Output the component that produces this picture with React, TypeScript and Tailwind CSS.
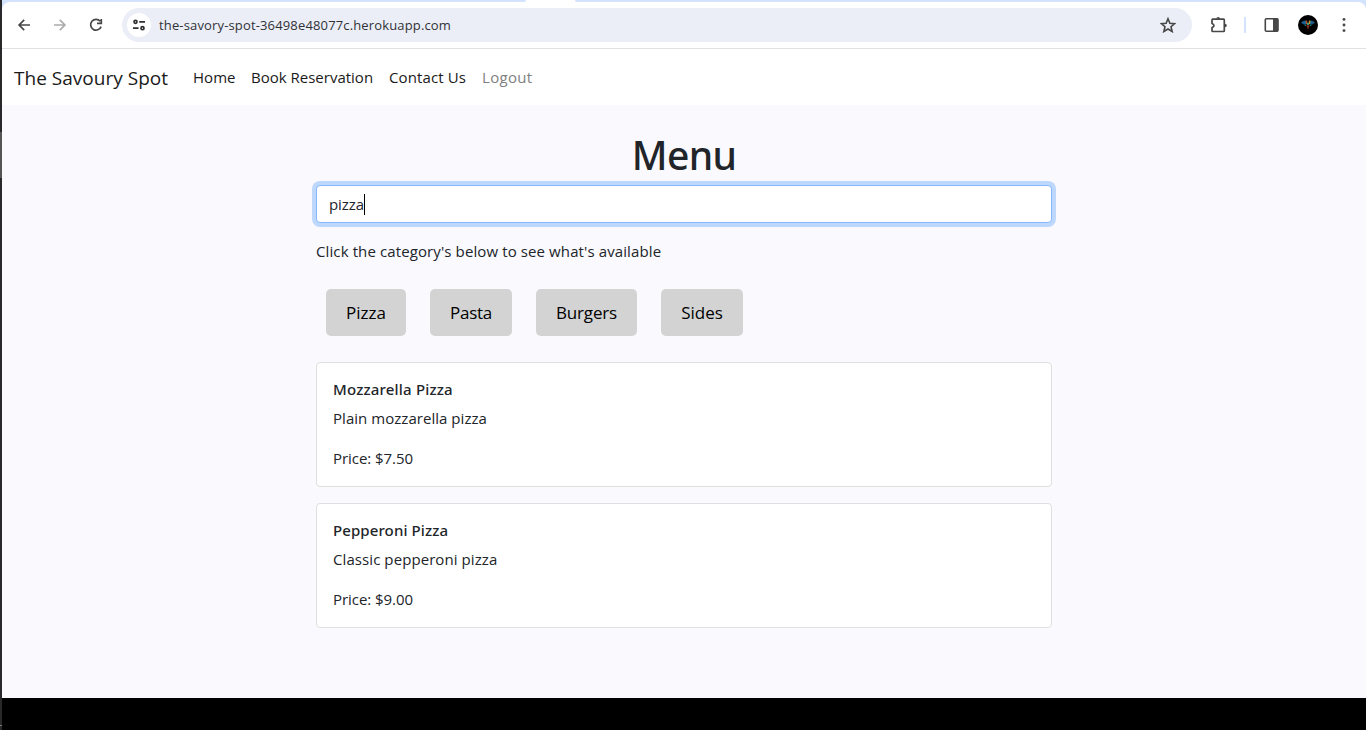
import type { ReactNode } from "react";

function Icon({ children, className }: { children: ReactNode; className: string }) {
  return (
    <svg viewBox="0 0 16 16" className={`h-4 w-4 shrink-0 ${className}`} fill="none" stroke="currentColor" strokeWidth="1.7">
      {children}
    </svg>
  );
}

function Avatar() {
  return (
    <svg viewBox="0 0 20 20" className="ml-[18px] h-5 w-5 shrink-0">
      <circle cx="10" cy="10" r="10" fill="#000" />
      <path d="M3 7.500 6 5.700h3l-1 3.500-3.500-.5z" fill="#17639c" />
      <path d="m17 7.500-3-1.800h-3l1 3.500 3.500-.5z" fill="#1d5f8c" />
      <path d="m7.500 5.700 1.500-.2.500 3-1.500 1z" fill="#b5502a" />
      <path d="m12.500 5.700-1.500-.2-.5 3 1.500 1z" fill="#c8922c" />
      <path d="m9 7.500 1 .5 1-.5v2.500H9z" fill="#4b9a76" />
      <path d="m5 9.200 3 .6v1.400zM15 9.200l-3 .6v1.400z" fill="#208f9a" />
      <path d="m8.200 10.200h3.600L10 14.700z" fill="#852b1c" />
    </svg>
  );
}

function BrowserBar() {
  return (
    <header className="shrink-0">
      <div className="flex h-[2px] justify-between bg-white">
        <div className="w-[524px] rounded-br-[2px] bg-[#d3e3fd]" />
        <div className="w-[791px] rounded-bl-[2px] bg-[#d3e3fd]" />
      </div>
      <div className="bg-[#d3e3fd]">
        <div className="flex h-[47px] items-center rounded-t-[8px] border-b border-[#dfe1e5] bg-white pl-[14px] text-[#474747]">
          <Icon className="">
            <path d="M14 8H3.200M8.200 2.900 3.100 8l5.100 5.100" />
          </Icon>
          <Icon className="ml-5 text-[#ababab]">
            <path d="M2 8h10.800M7.800 2.900 12.900 8l-5.100 5.100" />
          </Icon>
          <Icon className="ml-5">
            <path d="M12.200 4.300A5.400 5.400 0 1 0 13.100 9.600M13.300 2v4.400H9" />
          </Icon>
          <div className="ml-[18px] flex h-[34px] w-[1070px] items-center rounded-full bg-[#ebeef7] pr-4 pl-[5px]">
            <div className="flex h-6 w-6 items-center justify-center rounded-full bg-white text-[#303030]">
              <Icon className="">
                <circle cx="4.500" cy="4.800" r="1.500" />
                <path d="M8.200 4.800H14M2 11.200h5.500" />
                <circle cx="11.500" cy="11.200" r="1.500" />
              </Icon>
            </div>
            <span className="ml-2 flex-1 pt-[2px] text-[13px] tracking-[0.15px] text-[#303236]">the-savory-spot-36498e48077c.herokuapp.com</span>
            <svg viewBox="0.500 0.300 15 15" className="h-4 w-4" fill="none" stroke="currentColor" strokeWidth="1.500">
              <path d="m8 1.900 1.750 4.250 4.500.35-3.450 2.950 1.100 4.450L8 11.500l-3.900 2.400 1.100-4.450L1.750 6.500l4.500-.35z" />
            </svg>
          </div>
          <svg viewBox="0 0 18 18" className="ml-[18px] h-[18px] w-[18px] shrink-0" fill="none" stroke="currentColor" strokeWidth="1.700">
            <path d="M2.800 3.200h10.700q.8 0 .8.800v10.700q0 .8-.8.800H2.800q-.8 0-.8-.8v-3.100l1.600-1.100q.6-.9 0-1.800L2 7.400V4q0-.8.800-.8z" strokeLinejoin="round" />
            <path d="M6.400 2.700a1.800 1.800 0 0 1 3.600 0zM15 7.700a1.800 1.800 0 0 1 0 3.600z" fill="currentColor" stroke="none" />
          </svg>
          <div className="ml-4 h-4 w-[2px] bg-[#d3e3fd]" />
          <svg viewBox="0 0 16 16" className="ml-[18px] h-4 w-4 shrink-0">
            <rect x="1.300" y="1.800" width="12.700" height="12.500" rx="1" fill="none" stroke="#474747" strokeWidth="1.600" />
            <path d="M9 1.500h5v13H9z" fill="#474747" />
          </svg>
          <Avatar />
          <svg viewBox="0 0 4 16" className="ml-6 h-4 w-1 shrink-0" fill="currentColor">
            <circle cx="2" cy="2.400" r="1.450" />
            <circle cx="2" cy="8" r="1.450" />
            <circle cx="2" cy="13.600" r="1.450" />
          </svg>
        </div>
      </div>
    </header>
  );
}

function MenuCard({ name, description, price, nameClass, descriptionClass }: { name: string; description: string; price: string; nameClass: string; descriptionClass: string }) {
  return (
    <article className="mb-4 h-[125px] rounded-[4px] border border-[#dfdfe0] bg-white p-4 leading-6">
      <h2 className={`mb-[7px] font-['Noto_Sans',sans-serif] font-medium leading-[20px] ${nameClass}`}>{name}</h2>
      <p className={`mb-4 ${descriptionClass}`}>{description}</p>
      <p className="tracking-[-0.050px]">Price: {price}</p>
    </article>
  );
}

export default function App() {
  return (
    <div className="flex h-[730px] w-[1366px] overflow-hidden bg-black font-['Open_Sans',sans-serif] text-[15px] text-[#212529]">
      <div className="flex w-[2px] shrink-0 flex-col bg-[#29282a]">
        <div className="mt-[132px] h-[46px] bg-[#555555]" />
        <div className="mt-[547px] h-px bg-[#777777]" />
      </div>
      <div className="flex min-w-0 flex-1 flex-col">
        <BrowserBar />
        <nav className="flex h-14 shrink-0 items-center bg-white pl-3 text-[#1a1a1a]">
          <a className="w-[179px] pt-[2px] text-[19px] tracking-[0.020px]">The Savoury Spot</a>
          <a className="w-[58px] tracking-[0.050px]">Home</a>
          <a className="w-[138px] tracking-[0.000px]">Book Reservation</a>
          <a className="w-[93px] tracking-[0.120px]">Contact Us</a>
          <a className="tracking-[0.300px] text-[#808080]">Logout</a>
        </nav>
        <main className="h-[593px] shrink-0 bg-[#f9f9fe] pt-[26px]">
          <div className="mx-auto w-[736px]">
            <h1 className="mb-[6px] text-center font-['Noto_Sans',sans-serif] text-[39px] leading-[48px] font-medium tracking-[-0.700px]">Menu</h1>
            <div className="flex h-[38px] items-center rounded-[4px] border border-[#86b7fe] bg-white px-3 shadow-[0_0_0_4px_#bdd7fd]">
              <span className="tracking-[-0.100px]">pizza</span>
              <span className="h-[21px] w-px bg-black" />
            </div>
            <p className="mt-4 leading-6 tracking-[0.110px]">Click the category's below to see what's available</p>
            <div className="mt-[26px] mb-[26px] flex gap-6 pl-[10px] text-[17px] text-black">
              <button className="h-[47px] w-20 rounded-[5px] bg-[#d3d3d3]">Pizza</button>
              <button className="h-[47px] w-[82px] rounded-[5px] bg-[#d3d3d3] tracking-[-0.250px]">Pasta</button>
              <button className="h-[47px] w-[101px] rounded-[5px] bg-[#d3d3d3] tracking-[-0.170px]">Burgers</button>
              <button className="h-[47px] w-[82px] rounded-[5px] bg-[#d3d3d3]">Sides</button>
            </div>
            <MenuCard name="Mozzarella Pizza" description="Plain mozzarella pizza" price="$7.50" nameClass="tracking-[0.180px]" descriptionClass="tracking-[0.040px]" />
            <MenuCard name="Pepperoni Pizza" description="Classic pepperoni pizza" price="$9.00" nameClass="tracking-[0.100px]" descriptionClass="tracking-[0.080px]" />
          </div>
        </main>
      </div>
    </div>
  );
}
